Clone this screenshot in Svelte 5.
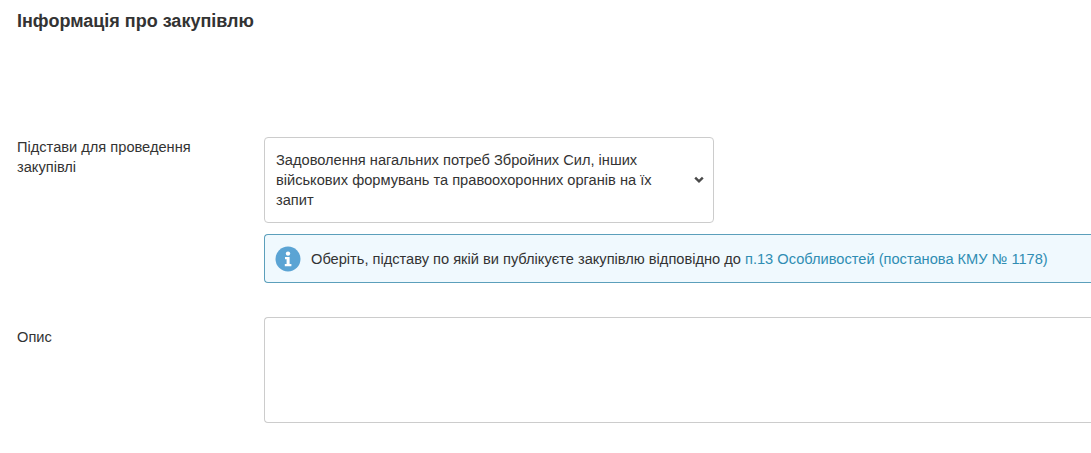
<script>
  const title = 'Інформація про закупівлю';
</script>

<main class="page">
  <h3 class="title">{title}</h3>

  <div class="row row-basis">
    <div class="label">Підстави для проведення закупівлі</div>
    <div class="field">
      <div class="select">
        <div class="select-text">Задоволення нагальних потреб Збройних Сил, інших військових формувань та правоохоронних органів на їх запит</div>
        <svg class="chevron" viewBox="0 0 10 8" width="10" height="8" aria-hidden="true">
          <path d="M1.2 1.6 5 5.4 8.8 1.6" fill="none" stroke="#4a4a4a" stroke-width="2.4"/>
        </svg>
      </div>
      <div class="alert">
        <svg class="info" viewBox="0 0 26 26" width="26" height="26" aria-hidden="true">
          <circle cx="13" cy="13" r="12.5" fill="#5ba4d4"/>
          <circle cx="13" cy="7.6" r="2.2" fill="#fff"/>
          <path d="M10 11h4.6v7H16.4v2.2H9.8V18h1.8v-4.8H10z" fill="#fff"/>
        </svg>
        <span class="alert-text">Оберіть, підставу по якій ви публікуєте закупівлю відповідно до <a href="#top">п.13 Особливостей (постанова КМУ № 1178)</a></span>
      </div>
    </div>
  </div>

  <div class="row row-desc">
    <div class="label label-desc">Опис</div>
    <div class="field">
      <div class="textarea"></div>
    </div>
  </div>
</main>

<style>
  :global(body) {
    margin: 0;
    background: #fff;
    overflow: hidden;
  }
  .page {
    width: 1091px;
    height: 453px;
    overflow: hidden;
    box-sizing: border-box;
    padding: 11px 0 0 17px;
    font-family: "Liberation Sans", Arial, sans-serif;
    font-size: 14.63px;
    line-height: 20px;
    color: #333;
  }
  .title {
    margin: 0;
    font-size: 18px;
    line-height: 20px;
    font-weight: 700;
    color: #333;
  }
  .row {
    display: flex;
  }
  .row-basis {
    margin-top: 106px;
  }
  .row-desc {
    margin-top: 34px;
  }
  .label {
    width: 247px;
    flex: none;
    box-sizing: border-box;
    padding-right: 40px;
  }
  .label-desc {
    padding-top: 10px;
  }
  .field {
    flex: none;
    width: 840px;
  }
  .select {
    width: 450px;
    height: 86px;
    box-sizing: border-box;
    border: 1px solid #ccc;
    border-radius: 4px;
    padding: 11px 9px 11px 11px;
    display: flex;
    align-items: center;
    justify-content: space-between;
    background: #fff;
  }
  .select-text {
    width: 395px;
  }
  .chevron {
    flex: none;
  }
  .alert {
    margin-top: 11px;
    height: 49px;
    box-sizing: border-box;
    border: 1px solid #5b9fbb;
    border-right: 0;
    border-radius: 4px 0 0 4px;
    background: #f0f9fe;
    display: flex;
    align-items: center;
    padding-left: 10px;
    gap: 10px;
    white-space: nowrap;
  }
  .info {
    flex: none;
  }
  .alert a {
    color: #2f8db3;
    text-decoration: none;
  }
  .textarea {
    height: 106px;
    box-sizing: border-box;
    border: 1px solid #ccc;
    border-right: 0;
    border-radius: 4px 0 0 4px;
    background: #fff;
  }
</style>
